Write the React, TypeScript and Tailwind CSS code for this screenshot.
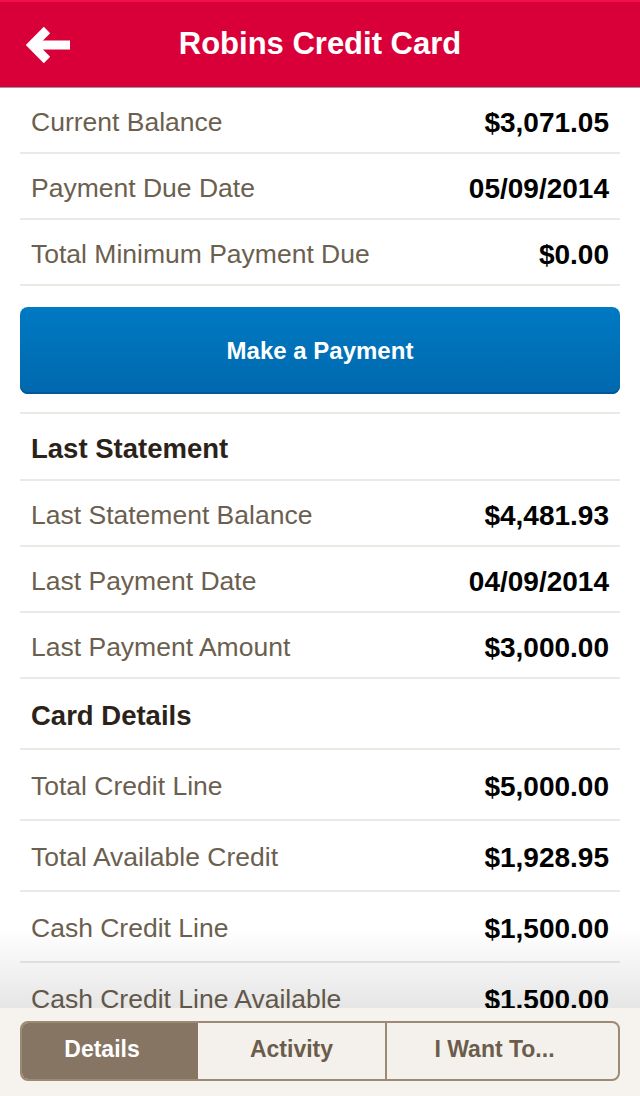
import React from 'react';

interface Row {
  label: string;
  value: string;
}

const topRows: Row[] = [
  { label: 'Current Balance', value: '$3,071.05' },
  { label: 'Payment Due Date', value: '05/09/2014' },
  { label: 'Total Minimum Payment Due', value: '$0.00' },
];

const statementRows: Row[] = [
  { label: 'Last Statement Balance', value: '$4,481.93' },
  { label: 'Last Payment Date', value: '04/09/2014' },
  { label: 'Last Payment Amount', value: '$3,000.00' },
];

const cardRows: Row[] = [
  { label: 'Total Credit Line', value: '$5,000.00' },
  { label: 'Total Available Credit', value: '$1,928.95' },
  { label: 'Cash Credit Line', value: '$1,500.00' },
  { label: 'Cash Credit Line Available', value: '$1,500.00' },
];

const font = { fontFamily: '"Liberation Sans", Arial, sans-serif' };

const DetailRow: React.FC<{ row: Row; tall?: boolean }> = ({ row, tall }) => (
  <div
    className={`flex items-center justify-between border-b-2 border-[#ebe9e4] px-[11px] pt-[5px] ${
      tall ? 'h-[71px]' : 'h-[66px]'
    }`}
  >
    <span className="text-[26.5px] text-[#6b5f50]">{row.label}</span>
    <span className="text-[28px] font-bold text-black">{row.value}</span>
  </div>
);

const SectionHeader: React.FC<{ title: string; tall?: boolean }> = ({ title, tall }) => (
  <div
    className={`flex items-center border-b-2 border-[#ebe9e4] px-[11px] pt-[4px] ${
      tall ? 'h-[71px]' : 'h-[67px]'
    }`}
  >
    <span className="text-[27.5px] font-bold text-[#2b2319]">{title}</span>
  </div>
);

export default function App() {
  return (
    <div className="relative flex h-[1096px] w-[640px] flex-col overflow-hidden bg-white" style={font}>
      <header className="relative flex h-[88px] shrink-0 items-center justify-center border-t-2 border-[#f2104a] border-b border-b-[#9a9a9a] bg-[#d9003a]">
        <button className="absolute left-[26px] top-[24px]" aria-label="Back">
          <svg width="46" height="38" viewBox="0 0 46 38">
            <path d="M21 4 L6 19 L21 34" fill="none" stroke="#fff" strokeWidth="9" strokeLinecap="butt" strokeLinejoin="miter" />
            <path d="M9 19 H44" fill="none" stroke="#fff" strokeWidth="9" />
          </svg>
        </button>
        <h1 className="text-[31px] font-bold text-white">Robins Credit Card</h1>
      </header>

      <main className="flex-1 overflow-hidden">
        <div className="mx-5">
          {topRows.map((row) => (
            <DetailRow key={row.label} row={row} />
          ))}
        </div>

        <div className="mx-5 mt-[21px] mb-[18px]">
          <button className="flex h-[87px] w-full items-center justify-center rounded-[8px] bg-gradient-to-b from-[#007ac3] to-[#0068ae] shadow-[inset_0_-2px_0_#00589a] text-[24px] font-bold text-white">
            Make a Payment
          </button>
        </div>

        <div className="mx-5 border-t-2 border-[#ebe9e4]">
          <SectionHeader title="Last Statement" />
          {statementRows.map((row) => (
            <DetailRow key={row.label} row={row} />
          ))}
          <SectionHeader title="Card Details" tall />
          {cardRows.map((row) => (
            <DetailRow key={row.label} row={row} tall />
          ))}
        </div>
      </main>

      <div className="pointer-events-none absolute bottom-[88px] left-0 h-[80px] w-full bg-gradient-to-b from-transparent to-black/10" />

      <footer className="flex h-[88px] shrink-0 items-start bg-[#f6f3ee] px-5 pt-[13px]">
        <div className="flex h-[60px] w-full overflow-hidden rounded-[8px] border-2 border-[#9c8b74] bg-[#f4f1ec]">
          <button className="w-[176px] bg-[#857562] pr-4 pb-[4px] text-[23px] font-bold text-white">Details</button>
          <button className="w-[189px] border-r-2 border-[#9c8b74] pb-[4px] text-[23px] font-bold text-[#6b5c4b]">
            Activity
          </button>
          <button className="flex-1 pr-4 pb-[4px] text-[23px] font-bold text-[#6b5c4b]">I Want To...</button>
        </div>
      </footer>
    </div>
  );
}
